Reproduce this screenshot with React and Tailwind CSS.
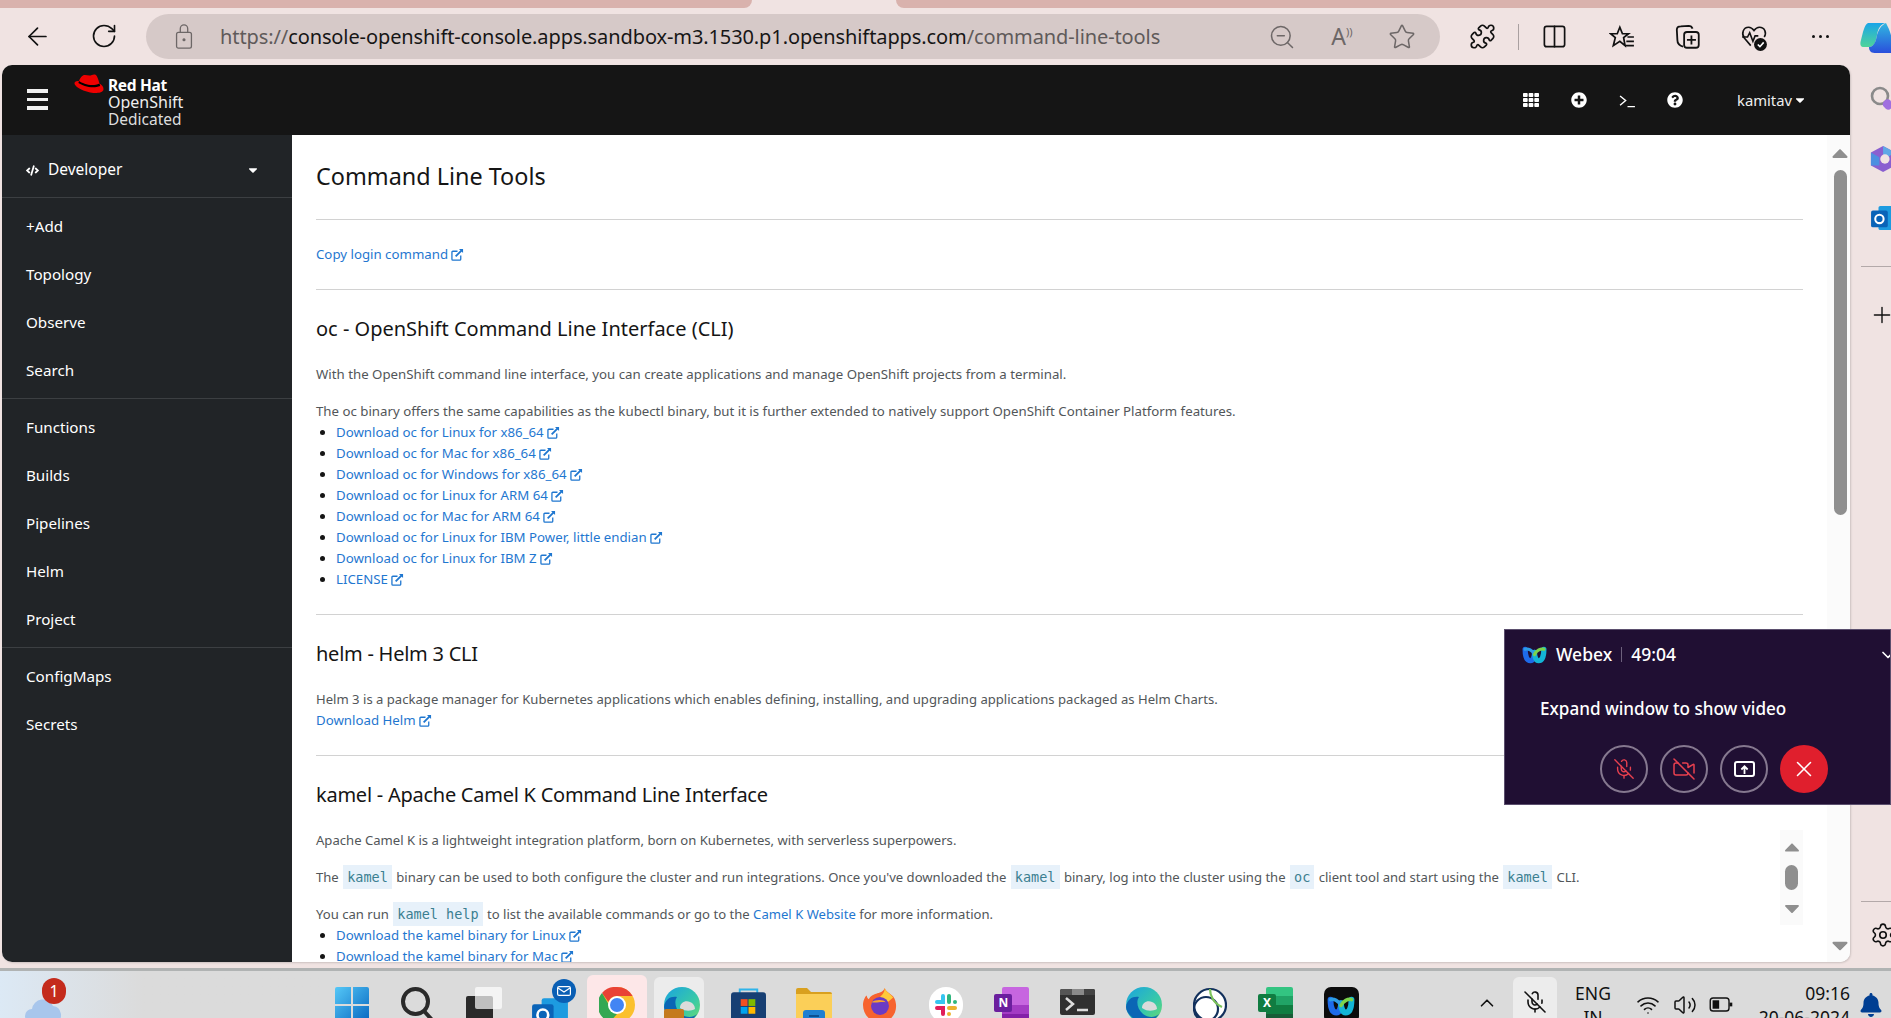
import React from "react";
import { ArrowLeft, RotateCw, ZoomOut, Star, Puzzle, Columns2, Plus, Settings, MicOff, VideoOff, X, ChevronDown, ChevronUp, Wifi, Volume2, Search } from "lucide-react";
import { FaTh, FaPlusCircle, FaQuestionCircle, FaCaretDown, FaCaretUp, FaCode, FaBell } from "react-icons/fa";

const ExtIcon = () => (
  <svg viewBox="0 0 14 14" className="inline-block w-[13px] h-[13px] ml-[3px] align-[-2px]" fill="none" stroke="currentColor">
    <path d="M10.5 8v4a1 1 0 0 1-1 1H2a1 1 0 0 1-1-1V4.5a1 1 0 0 1 1-1h5" strokeWidth="1.4" />
    <path d="M5 9l6.5-6.5" strokeWidth="2" />
    <path d="M8.6 1h4.4v4.4z" fill="currentColor" stroke="none" />
  </svg>
);

const Ext = ({ children }) => (
  <a className="text-[#1f77d0]">
    {children}
    <ExtIcon />
  </a>
);

const Code = ({ children }) => (
  <code className="bg-[#e7f1fa] text-[#3b7f91] px-[4px] py-[4px] mx-px text-[13.5px] font-['DejaVu_Sans_Mono',monospace]">{children}</code>
);

const Li = ({ children }) => (
  <li className="h-[21px] flex items-center">
    <span className="w-[5px] h-[5px] rounded-full bg-[#151515] ml-[4px] mr-[11px]" />
    <Ext>{children}</Ext>
  </li>
);

const H2 = ({ children, tight }) => (
  <h2 className={`h-[28px] leading-[28px] text-[20px] text-[#151515] mb-[21px] ${tight ? "tracking-[-0.25px]" : ""}`}>{children}</h2>
);

const Section = ({ children }) => <section className="border-b border-[#d2d2d2] pt-[25px] pb-6">{children}</section>;

const NavGroup = ({ items }) => (
  <div className="py-1 border-b border-[#3c3f42]">
    {items.map((t) => (
      <div key={t} className="h-12 flex items-center pl-[24px] text-[15.2px] text-white">{t}</div>
    ))}
  </div>
);

const RedHatLogo = () => (
  <svg viewBox="0 0 30 22" className="w-[30px] h-[22px] mt-[9px] ml-[26px] shrink-0">
    <path d="M9 1.5C11 .6 13.5 1.6 15.5 1.6 17.5 1.6 19 0 21 .6 23.5 1.4 24.5 6.5 25.5 9.5 27.5 10.8 29.5 12.6 29.5 15 29.5 18.5 25 19 21 19 13 19 .8 13.5.5 9.5.4 7.8 2 6.6 5 7 5.6 5 7 2.5 9 1.5Z" fill="#e00" />
    <path d="M5 7C9 9.8 18 13 25.5 9.5L26.2 12C18.5 15 9 12 4.4 9Z" fill="#000" />
  </svg>
);

const Favorites = () => (
  <svg viewBox="0 0 24 24" className="w-[26px] h-[26px] shrink-0" fill="none" stroke="#111" strokeWidth="1.6">
    <path d="M10 3l2.4 6H18l-4.5 3.6 1.3 7.4L10 16l-6 4 1.8-7.4L1.5 9H7.6z" />
    <path d="M17 12h6M16 16h7M15 20h8" />
  </svg>
);

const Collections = () => (
  <svg viewBox="0 0 24 24" className="w-[27px] h-[27px] shrink-0" fill="none" stroke="#111" strokeWidth="1.6">
    <path d="M8 21C5 20 3 18 3 15L2.5 6C2.5 4 4 3 6 3l7-.5C15 2.5 16 3.5 16.500 5" />
    <rect x="9" y="8" width="13" height="14" rx="2.5" />
    <path d="M15.500 11v8M11.500 15h8" />
  </svg>
);

const Health = () => (
  <svg viewBox="0 0 26 26" className="w-[28px] h-[28px] shrink-0" fill="none" stroke="#111" strokeWidth="1.5">
    <path d="M10 21L4 14C1 10 3 4 8 4c2 0 3.500 1 5 3 1.500-2 3-3 5-3 5 0 7 5 4.500 9" />
    <path d="M2 13h5l2-4 3 8 2-5h3" />
    <circle cx="19" cy="20" r="6" fill="#111" stroke="none" />
    <path d="M16.500 20l2 2 3.500-4" stroke="#fff" />
  </svg>
);

const Copilot = () => (
  <svg viewBox="0 0 32 32" className="w-[32px] h-[32px] ml-[31px] shrink-0">
    <defs>
      <linearGradient id="cpA" x1="0" y1="0" x2="0" y2="1"><stop offset="0" stopColor="#1aa5e8" /><stop offset="1" stopColor="#4fd49a" /></linearGradient>
      <linearGradient id="cpB" x1="0" y1="0" x2="0" y2="1"><stop offset="0" stopColor="#30b8e0" /><stop offset="1" stopColor="#2a4fdc" /></linearGradient>
    </defs>
    <path d="M8 2h18c-6 1-8 6-9 12-1 7-3 12-8 12H3C0 26 0 22 1 19 3 12 4 4 8 2Z" fill="url(#cpA)" />
    <path d="M17 14c1-4 4-10 9-12 3 6 6 12 6 20v10H16c-4 0-7-1-7-6 5 0 7-6 8-12Z" fill="url(#cpB)" />
  </svg>
);

const OutlookIcon = ({ size = 30 }) => (
  <svg viewBox="0 0 30 28" style={{ width: size, height: size * 0.93 }}>
    <rect x="8" y="1" width="22" height="26" rx="2" fill="#1d9be0" />
    <rect x="0" y="6" width="18" height="18" rx="2" fill="#0a64b8" />
    <circle cx="9" cy="15" r="4.500" fill="none" stroke="#fff" strokeWidth="2.200" />
  </svg>
);

const Windows = () => (
  <svg viewBox="0 0 36 36" className="w-[36px] h-[36px]">
    <defs><linearGradient id="win" x1="0" y1="0" x2="1" y2="1"><stop offset="0" stopColor="#55c8f7" /><stop offset="1" stopColor="#0665c0" /></linearGradient></defs>
    <path d="M1 2a2 2 0 0 1 2-2h14v17H1zM19 0h14a2 2 0 0 1 2 2v15H19zM1 19h16v17H3a2 2 0 0 1-2-2zM19 19h16v15a2 2 0 0 1-2 2H19z" fill="url(#win)" />
  </svg>
);

const SearchGlyph = () => (
  <svg viewBox="0 0 36 36" className="w-[36px] h-[36px]" fill="none" stroke="#2a2a2a" strokeWidth="4">
    <circle cx="15.500" cy="14.500" r="12.500" />
    <path d="M24 24l9 10" />
  </svg>
);

const TaskView = () => (
  <div className="relative w-[36px] h-[36px]">
    <div className="absolute left-0 top-[9px] w-[27px] h-[27px] rounded-[2px] bg-[#2a2a2a]" />
    <div className="absolute left-[9px] top-0 w-[27px] h-[22px] rounded-[2px] bg-white/70" />
  </div>
);

const OutlookTask = () => (
  <div className="relative w-[36px] h-[36px]">
    <div className="absolute left-0 top-[10px]"><OutlookIcon size={36} /></div>
    <div className="absolute left-[20px] top-[-8px] w-[24px] h-[24px] rounded-full bg-[#0a5fb4] flex items-center justify-center">
      <svg viewBox="0 0 14 10" className="w-[14px] h-[10px]" fill="none" stroke="#fff" strokeWidth="1.200"><rect x=".6" y=".6" width="12.800" height="8.800" rx="1.500" /><path d="M1 2l6 4 6-4" /></svg>
    </div>
  </div>
);

const Chrome = () => (
  <svg viewBox="0 0 36 36" className="w-[36px] h-[36px]">
    <circle cx="18" cy="18" r="18" fill="#fbc02d" />
    <path d="M18 0a18 18 0 0 1 15.600 9H18a9 9 0 0 0-8.500 6L3 6A18 18 0 0 1 18 0Z" fill="#e94235" />
    <path d="M3 6l7 12a9 9 0 0 0 8 9l-7 8A18 18 0 0 1 3 6Z" fill="#34a853" />
    <circle cx="18" cy="18" r="9" fill="#fff" />
    <circle cx="18" cy="18" r="7" fill="#4285f4" />
  </svg>
);

const Edge = ({ bag }) => (
  <div className="relative w-[36px] h-[36px]">
    <svg viewBox="0 0 36 36" className="w-[36px] h-[36px]">
      <defs>
        <linearGradient id="edgeA" x1="0" y1="0" x2="1" y2="1"><stop offset="0" stopColor="#1aa3e0" /><stop offset=".6" stopColor="#38c9a8" /><stop offset="1" stopColor="#6fdb6a" /></linearGradient>
      </defs>
      <circle cx="18" cy="18" r="18" fill="url(#edgeA)" />
      <path d="M0 20C1 12 7 9 13 10 10 14 11 22 17 27 22 31 29 31 33 27 28 35 17 39 8 32 3 28 0 24 0 20Z" fill="#0b66b5" />
      <path d="M16 21c0-6 6-8 10-6 3 1 5 4 5 7-4 2-9 3-15-1Z" fill="#dbdbdb" />
    </svg>
    {bag && <div className="absolute left-0 top-[22px] w-[20px] h-[14px] rounded-[2px] bg-[#c47a1e]" />}
  </div>
);

const Store = () => (
  <svg viewBox="0 0 36 36" className="w-[35px] h-[36px]">
    <path d="M9 6V2h18v4" fill="none" stroke="#2fb4ea" strokeWidth="2" />
    <rect x="0" y="5" width="36" height="31" rx="3" fill="#173f73" />
    <rect x="10" y="12" width="7" height="7" fill="#f25022" />
    <rect x="18" y="12" width="7" height="7" fill="#7fba00" />
    <rect x="10" y="20" width="7" height="7" fill="#00a4ef" />
    <rect x="18" y="20" width="7" height="7" fill="#ffb900" />
  </svg>
);

const Folder = () => (
  <svg viewBox="0 0 36 36" className="w-[36px] h-[36px]">
    <path d="M0 3a2 2 0 0 1 2-2h9l4 4h19a2 2 0 0 1 2 2v29H0z" fill="#d9a01f" />
    <rect x="0" y="7" width="36" height="29" fill="#fbcf58" />
    <rect x="7" y="23" width="22" height="13" rx="3" fill="#1f7fd0" />
    <rect x="13" y="28" width="10" height="2" fill="#0d4f91" />
  </svg>
);

const Firefox = () => (
  <svg viewBox="0 0 36 36" className="w-[34px] h-[36px]">
    <path d="M23 0c1 4 6 6 9 9 6 8 4 27-14 27C6 36 0 27 0 18 0 14 2 9 4 8c0 2 1 3 2 4 2-4 5-5 8-6 3-1 8-2 9-6Z" fill="#f7632e" />
    <path d="M23 0c1 4 7 7 9 10l-6 5c-2-2-5-4-9-4 2-3 6-5 6-11Z" fill="#ffc93a" />
    <circle cx="18" cy="19" r="9.500" fill="#6a3bc4" />
    <path d="M9 15c4-3 13-3 15 0-5-1-9 1-15 0Z" fill="#f7a32e" />
  </svg>
);

const Slack = () => (
  <div className="w-[34px] h-[36px] rounded-full bg-white flex items-center justify-center">
    <svg viewBox="0 0 24 24" className="w-[24px] h-[24px]" fill="none" strokeWidth="4" strokeLinecap="round">
      <path d="M9 3v6H3" stroke="#36c5f0" />
      <path d="M15 3v6" stroke="#2eb67d" /><path d="M21 9h0" stroke="#2eb67d" />
      <path d="M21 15h-6" stroke="#ecb22e" /><path d="M15 21h0" stroke="#ecb22e" />
      <path d="M3 15h6v6" stroke="#e01e5a" />
    </svg>
  </div>
);

const OfficeTile = ({ letter, bg, c1, c2, c3, c4 }) => (
  <div className="relative w-[35px] h-[36px]">
    <div className="absolute left-[8px] top-0 w-[27px] h-[36px] flex flex-col rounded-[2px] overflow-hidden">
      <div className={`flex-1 ${c1}`} /><div className={`flex-1 ${c2}`} /><div className={`flex-1 ${c3}`} /><div className={`flex-1 ${c4}`} />
    </div>
    <div className={`absolute left-0 top-[7px] w-[18px] h-[18px] rounded-[2px] ${bg} text-white text-[12px] leading-[18px] font-bold text-center`}>{letter}</div>
  </div>
);

const TerminalApp = () => (
  <div className="w-[35px] h-[26px] mt-[2px] rounded-[2px] overflow-hidden bg-[#303030] relative">
    <div className="h-[6px] flex"><div className="w-[12px] bg-[#555]" /><div className="w-[12px] bg-[#8a8a8a]" /><div className="flex-1 bg-[#444]" /></div>
    <svg viewBox="0 0 35 20" className="w-[35px] h-[20px]" fill="none" stroke="#ddd" strokeWidth="2.500"><path d="M6 3l7 6-7 6" /><path d="M17 15h11" /></svg>
  </div>
);

const Ring = () => (
  <svg viewBox="0 0 34 36" className="w-[34px] h-[36px]" fill="#fff" stroke="#12305c" strokeWidth="2.200">
    <circle cx="17" cy="18" r="16" />
    <circle cx="13" cy="22" r="12" fill="none" />
    <path d="M17 2c0 6 3 14 12 18" stroke="#7cc35a" fill="none" />
  </svg>
);

const WebexLogo = ({ w = 35, h = 36, tile }) => (
  <div className={tile ? "w-[35px] h-[36px] rounded-[7px] bg-[#0c0c0c] flex items-center justify-center" : ""}>
    <svg viewBox="0 0 24 18" style={{ width: tile ? 28 : w, height: tile ? 21 : h }} fill="none" strokeWidth="5" strokeLinecap="round">
      <path d="M3 4c0 7 2 11 5 11s4-5 4-8" stroke="#1e6bea" />
      <path d="M12 7c0 3 1 8 4 8s5-4 5-11" stroke="#13b5d6" />
      <path d="M3 4c3-1 7 1 9 5" stroke="#2d9de6" strokeWidth="3" />
      <path d="M21 4c-3-1-7 1-9 5" stroke="#7bd44c" strokeWidth="3" />
    </svg>
  </div>
);

const Cell = ({ children }) => <div className="w-[65.9px] shrink-0 flex justify-center">{children}</div>;

const Battery = () => (
  <svg viewBox="0 0 26 16" className="w-[25px] h-[15px]" fill="none" stroke="#111" strokeWidth="1.500">
    <rect x="1" y="1" width="20" height="14" rx="3" />
    <rect x="3.500" y="3.500" width="7" height="9" fill="#111" stroke="none" />
    <path d="M23 6v4" strokeWidth="3" />
  </svg>
);

const WebexBtn = ({ children, red }) => (
  <div className={`w-12 h-12 rounded-full flex items-center justify-center ${red ? "bg-[#e01f2d]" : "border-2 border-[#85788f]"}`}>{children}</div>
);

export default function App() {
  return (
    <div className="relative w-[1891px] h-[1018px] overflow-hidden flex flex-col bg-[#f0e3e2] font-['Noto_Sans',sans-serif]">
      {/* tab strip */}
      <div className="h-2 flex shrink-0">
        <div className="w-[752px] bg-[#d9b2ad] rounded-br-lg" />
        <div className="w-[144px]" />
        <div className="flex-1 bg-[#d9b2ad] rounded-bl-lg" />
      </div>

      {/* browser toolbar */}
      <div className="h-[57px] shrink-0 flex pt-[6px] relative">
        <div className="w-[146px] shrink-0 flex items-start pt-[8px] pl-[23px] gap-[38px] text-[#111]">
          <ArrowLeft size={29} strokeWidth={1.4} />
          <RotateCw size={28} strokeWidth={1.4} />
        </div>
        <div className="w-[1294px] shrink-0 h-[45px] rounded-full bg-[#d6c9c8] flex items-center">
          <svg viewBox="0 0 18 28" className="w-[18px] h-[26px] ml-[29px] mr-[27px] text-[#6d6767]" fill="none" stroke="currentColor" strokeWidth="1.400">
            <rect x="1" y="9" width="16" height="17" rx="2" />
            <path d="M5 9V5a4 4 0 0 1 8 0v4" />
            <circle cx="9" cy="17" r="1" fill="currentColor" />
          </svg>
          <div className="text-[20px] whitespace-nowrap tracking-[-0.1px] text-[#5f5a5a] w-[939px]">
            https://<span className="text-[#161616]">console-openshift-console.apps.sandbox-m3.1530.p1.openshiftapps.com</span>/command-line-tools
          </div>
          <div className="flex items-center gap-[32px] ml-[109px] text-[#6d6767]">
            <ZoomOut size={28} strokeWidth={1.3} />
            <div className="w-[28px] text-[23px] leading-none text-center text-[#6d6767]">A<span className="text-[11px] align-super">))</span></div>
            <Star size={28} strokeWidth={1.3} />
          </div>
        </div>
        <div className="flex items-center shrink-0 h-[45px] pl-[29px] text-[#111]">
          <Puzzle size={27} strokeWidth={1.5} className="shrink-0" />
          <div className="w-px h-[26px] bg-[#a9a0a0] ml-[22px] mr-[22px]" />
          <Columns2 size={27} strokeWidth={1.5} className="shrink-0" />
          <div className="ml-[41px]"><Favorites /></div>
          <div className="ml-[39px]"><Collections /></div>
          <div className="ml-[39px]"><Health /></div>
          <div className="ml-[44px] flex gap-[4px]">
            <span className="w-[3px] h-[3px] rounded-full bg-[#111]" />
            <span className="w-[3px] h-[3px] rounded-full bg-[#111]" />
            <span className="w-[3px] h-[3px] rounded-full bg-[#111]" />
          </div>
          <Copilot />
        </div>
      </div>

      {/* window + right rail */}
      <div className="h-[897px] shrink-0 flex">
        <div className="ml-[2px] w-[1848px] rounded-t-[10px] rounded-b-[10px] overflow-hidden flex flex-col bg-white shadow-[1px_1px_2px_rgba(0,0,0,0.15)]">
          {/* masthead */}
          <header className="h-[70px] shrink-0 bg-[#151515] flex text-white">
            <div className="w-[25px] shrink-0" />
            <div className="w-[21px] mt-[24px] flex flex-col gap-[5px] shrink-0">
              <div className="h-[3.500px] bg-[#f0f0f0]" />
              <div className="h-[3.500px] bg-[#f0f0f0]" />
              <div className="h-[3.500px] bg-[#f0f0f0]" />
            </div>
            <div className="flex">
              <RedHatLogo />
              <div className="ml-[4px] pt-[12px] text-[16px] leading-[17px]">
                <div className="font-bold text-[15.500px] tracking-[-0.3px]">Red Hat</div>
                <div className="text-[#eee]">OpenShift</div>
                <div className="text-[15.500px] text-[#ddd]">Dedicated</div>
              </div>
            </div>
            <div className="ml-auto flex items-center h-full pr-[43px]">
              <FaTh size={16} />
              <FaPlusCircle size={16} className="ml-[32px]" />
              <svg viewBox="0 0 18 14" className="w-[17px] h-[13px] ml-[32px] mt-[3px]" fill="none" stroke="#fff" strokeWidth="1.500"><path d="M1 1l6 5-6 5" /><path d="M9 12.500h8" /></svg>
              <FaQuestionCircle size={16} className="ml-[31px]" />
              <span className="ml-[54px] text-[14.800px] text-[#eee]">kamitav</span>
              <FaCaretDown size={14} className="ml-[1px]" />
            </div>
          </header>

          <div className="flex-1 flex min-h-0">
            {/* sidebar */}
            <aside className="w-[290px] shrink-0 bg-[#212427]">
              <div className="h-[63px] flex items-center pt-[8px] pl-[24px] pr-[32px] border-b border-[#3c3f42] text-white">
                <FaCode size={13} />
                <span className="ml-[9px] text-[15.500px]">Developer</span>
                <FaCaretDown size={14} className="ml-auto" />
              </div>
              <NavGroup items={["+Add", "Topology", "Observe", "Search"]} />
              <NavGroup items={["Functions", "Builds", "Pipelines", "Helm", "Project"]} />
              <div className="py-1">
                {["ConfigMaps", "Secrets"].map((t) => (
                  <div key={t} className="h-12 flex items-center pl-[24px] text-[15.200px] text-white">{t}</div>
                ))}
              </div>
            </aside>

            {/* content */}
            <main className="relative flex-1 min-w-0 flex overflow-hidden">
              <div className="w-[1535px] shrink-0 px-6 text-[13.250px] leading-[21px] text-[#525659]">
                <h1 className="h-9 leading-9 mt-[23px] text-[23.400px] text-[#151515]">Command Line Tools</h1>
                <div className="h-[26px] border-b border-[#d2d2d2]" />
                <div className="border-b border-[#d2d2d2] pt-6 pb-6"><Ext>Copy login command</Ext></div>

                <Section>
                  <H2>oc - OpenShift Command Line Interface (CLI)</H2>
                  <p className="mb-4">With the OpenShift command line interface, you can create applications and manage OpenShift projects from a terminal.</p>
                  <p>The oc binary offers the same capabilities as the kubectl binary, but it is further extended to natively support OpenShift Container Platform features.</p>
                  <ul>
                    <Li>Download oc for Linux for x86_64</Li>
                    <Li>Download oc for Mac for x86_64</Li>
                    <Li>Download oc for Windows for x86_64</Li>
                    <Li>Download oc for Linux for ARM 64</Li>
                    <Li>Download oc for Mac for ARM 64</Li>
                    <Li>Download oc for Linux for IBM Power, little endian</Li>
                    <Li>Download oc for Linux for IBM Z</Li>
                    <Li>LICENSE</Li>
                  </ul>
                </Section>

                <Section>
                  <H2 tight>helm - Helm 3 CLI</H2>
                  <p className="text-[13.100px]">Helm 3 is a package manager for Kubernetes applications which enables defining, installing, and upgrading applications packaged as Helm Charts.</p>
                  <Ext>Download Helm</Ext>
                </Section>

                <section className="pt-[25px]">
                  <H2 tight>kamel - Apache Camel K Command Line Interface</H2>
                  <p className="mb-4 text-[13.100px]">Apache Camel K is a lightweight integration platform, born on Kubernetes, with serverless superpowers.</p>
                  <p className="mb-4 text-[13.100px]">The <Code>kamel</Code> binary can be used to both configure the cluster and run integrations. Once you've downloaded the <Code>kamel</Code> binary, log into the cluster using the <Code>oc</Code> client tool and start using the <Code>kamel</Code> CLI.</p>
                  <p className="text-[13.100px]">You can run <Code>kamel help</Code> to list the available commands or go to the <a className="text-[#1f77d0]">Camel K Website</a> for more information.</p>
                  <ul>
                    <Li>Download the kamel binary for Linux</Li>
                    <Li>Download the kamel binary for Mac</Li>
                  </ul>
                </section>
              </div>

              {/* page scrollbar */}
              <div className="flex-1 bg-[#fbfbfb] flex flex-col items-center relative pt-[7px] pr-[4px] text-[#8f8f8f]">
                <FaCaretUp size={26} className="-mt-[2px] -mb-[3px]" />
                <div className="w-[13px] h-[345px] rounded-full bg-[#8f8f8f] mt-[7px]" />
                <FaCaretDown size={26} className="mt-auto mb-[4px]" />
              </div>

              {/* nested scrollbar, floats over the section */}
              <div className="absolute left-[1488px] top-[695px] w-[23px] h-[95px] bg-[#fafafa] flex flex-col items-center justify-between py-[10px] text-[#8f8f8f]">
                <FaCaretUp size={24} className="-my-[5px]" />
                <div className="w-[13px] h-[25px] rounded-full bg-[#8f8f8f]" />
                <FaCaretDown size={24} className="-my-[5px]" />
              </div>
            </main>
          </div>
        </div>

        {/* edge side rail */}
        <div className="flex-1 min-w-0 overflow-hidden flex flex-col pt-[20px]">
          <div className="relative ml-[19px] h-[26px] w-[30px]">
            <Search size={24} strokeWidth={2.600} className="text-[#8a8a8a]" />
            <div className="absolute left-[14px] top-[15px] w-[10px] h-[9px] bg-[#a06fe0] rounded-sm rotate-45" />
          </div>
          <svg viewBox="0 0 30 30" className="w-[28px] h-[28px] ml-[20px] mt-[34px] shrink-0">
            <path d="M14 1l13 7v14l-13 7-13-7V8z" fill="#8a5fd0" />
            <path d="M14 1l13 7-8 5-5-3z" fill="#5fa8e6" />
            <path d="M1 8l9 5v9l-9 0z" fill="#4d8fe0" />
            <circle cx="16" cy="15" r="5" fill="#f0e3e2" />
          </svg>
          <div className="ml-[21px] mt-[32px] w-[30px]"><OutlookIcon size={28} /></div>
          <div className="ml-[11px] mt-[35px] h-px bg-[#b3a9a9]" />
          <Plus size={26} strokeWidth={1.300} className="ml-[19px] mt-[35px] text-[#111] shrink-0" />
          <div className="mt-auto ml-[11px] h-px bg-[#b3a9a9]" />
          <Settings size={26} strokeWidth={1.500} className="ml-[20px] mt-[20px] mb-[14px] text-[#111] shrink-0" />
        </div>
      </div>

      <div className="h-[6px] shrink-0" />

      {/* windows taskbar */}
      <div className="h-[50px] shrink-0 border-t-[3px] border-[#b0b3b3] flex bg-[#dbdbdb] overflow-hidden text-[#111]">
        <div className="w-[319px] shrink-0 relative bg-gradient-to-r from-[#dce9f5] to-[#dbdbdb] to-[45%]">
          <svg viewBox="0 0 38 26" className="absolute left-[25px] top-[26px] w-[38px] h-[26px]">
            <path d="M7 26a7 7 0 0 1 0-14 11 11 0 0 1 21-3 9 9 0 0 1 3 17z" fill="#a8c6ec" />
          </svg>
          <div className="absolute left-[42px] top-[7px] w-[24px] h-[26px] rounded-full bg-[#c42b1c] text-white text-[16px] leading-[26px] text-center">1</div>
        </div>
        <div className="flex items-start pt-[16px]">
          <Cell><Windows /></Cell>
          <Cell><SearchGlyph /></Cell>
          <Cell><TaskView /></Cell>
          <Cell><OutlookTask /></Cell>
          <div className="w-px" />
          <Cell>
            <div className="relative w-[36px] h-[36px]">
              <div className="absolute -left-[12px] -top-[12px] w-[60px] h-[50px] rounded-t-[6px] bg-[#fde7e8]" />
              <div className="relative"><Chrome /></div>
            </div>
          </Cell>
          <Cell>
            <div className="relative w-[36px] h-[36px]">
              <div className="absolute -left-[10px] -top-[10px] w-[50px] h-[50px] rounded-t-[6px] bg-[#ececec]" />
              <div className="relative"><Edge bag /></div>
            </div>
          </Cell>
          <Cell><Store /></Cell>
          <Cell><Folder /></Cell>
          <Cell><Firefox /></Cell>
          <Cell><Slack /></Cell>
          <Cell><OfficeTile letter="N" bg="bg-[#6b1f9e]" c1="bg-[#c766e0]" c2="bg-[#c766e0]" c3="bg-[#a43bc4]" c4="bg-[#8420a8]" /></Cell>
          <Cell><TerminalApp /></Cell>
          <Cell><Edge /></Cell>
          <Cell><Ring /></Cell>
          <Cell><OfficeTile letter="X" bg="bg-[#107c41]" c1="bg-[#33c481]" c2="bg-[#21a366]" c3="bg-[#107c41]" c4="bg-[#185c37]" /></Cell>
          <Cell><WebexLogo tile /></Cell>
        </div>
        <div className="ml-auto flex w-[421px] shrink-0">
          <div className="w-[43px] flex justify-center pt-[21px] pr-[10px]"><ChevronUp size={22} strokeWidth={1.800} /></div>
          <div className="w-[44px] h-[45px] mt-[6px] rounded-t-[6px] bg-[#ececec] flex justify-center pt-[13px]"><MicOff size={24} strokeWidth={1.600} /></div>
          <div className="w-[72px] text-center pt-[10px] text-[17.500px] leading-[24px]">ENG<br />IN</div>
          <div className="w-[38px] flex justify-center pt-[22px]"><Wifi size={24} strokeWidth={1.600} /></div>
          <div className="w-[36px] flex justify-center pt-[22px]"><Volume2 size={24} strokeWidth={1.500} /></div>
          <div className="w-[36px] flex justify-center pt-[26px]"><Battery /></div>
          <div className="w-[111px] text-right pt-[10px] text-[17.500px] leading-[24px] whitespace-nowrap">09:16<br />20-06-2024</div>
          <div className="w-[41px] flex justify-center pt-[22px] text-[#003e92]"><FaBell size={24} /></div>
        </div>
      </div>

      {/* webex mini window */}
      <div className="absolute left-[1504px] top-[629px] w-[387px] h-[176px] bg-[#200f33] border border-[#5b4f6e] text-white overflow-hidden">
        <div className="flex items-center h-[48px] pl-[17px] pt-[1px]">
          <WebexLogo w={25} h={19} />
          <span className="ml-[9px] text-[17.500px] font-medium">Webex</span>
          <span className="w-px h-[15px] bg-[#6d617c] mx-[9px]" />
          <span className="text-[17.500px] font-medium">49:04</span>
          <ChevronDown size={20} className="ml-auto -mr-[8px]" />
        </div>
        <div className="pl-[35px] mt-[15px] text-[17.100px] font-medium leading-[32px]">Expand window to show video</div>
        <div className="flex gap-3 pl-[95px] mt-[20px]">
          <WebexBtn><MicOff size={22} strokeWidth={1.500} className="text-[#e8404f]" /></WebexBtn>
          <WebexBtn><VideoOff size={24} strokeWidth={1.500} className="text-[#e8404f]" /></WebexBtn>
          <WebexBtn>
            <div className="w-[21px] h-[16px] border-2 border-white rounded-[3px] flex items-center justify-center">
              <svg viewBox="0 0 10 10" className="w-[9px] h-[9px]" fill="none" stroke="#fff" strokeWidth="2"><path d="M5 10V2M1.500 5L5 1.500 8.500 5" /></svg>
            </div>
          </WebexBtn>
          <WebexBtn red><X size={26} strokeWidth={1.400} /></WebexBtn>
        </div>
      </div>
    </div>
  );
}
